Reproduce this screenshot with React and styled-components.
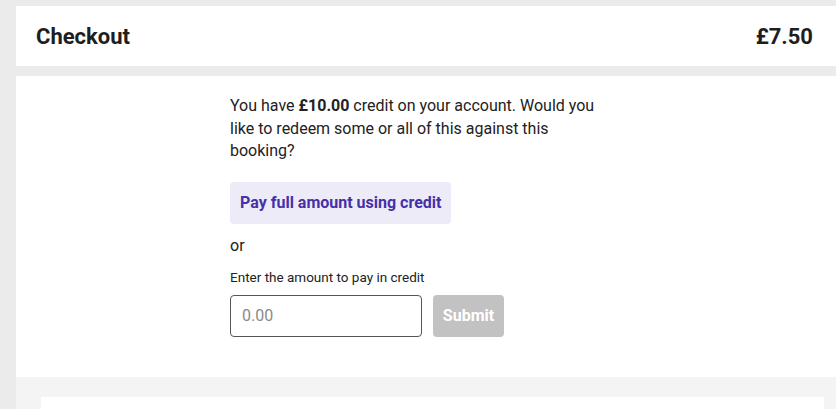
import styled, { createGlobalStyle } from "styled-components"

const GlobalStyle = createGlobalStyle`
    html, body {
        margin: 0;
        padding: 0;
        background-color: #EBEBEB;
        font-family: Roboto, "Liberation Sans", sans-serif;
        color: #212121;
        overflow: hidden;
    }
`

export default function App() {
    return (
        <Page>
            <GlobalStyle />
            <Header>
                <h1>Checkout</h1>
                <span className="total">£7.50</span>
            </Header>

            <CreditPanel>
                <CreditColumn>
                    <p className="intro">
                        You have <strong>£10.00</strong> credit on your account. Would you like to redeem some or all of this against this booking?
                    </p>

                    <PayFullButton>Pay full amount using credit</PayFullButton>

                    <span className="or">or</span>

                    <label className="amountLabel" htmlFor="credit-amount">Enter the amount to pay in credit</label>
                    <AmountRow>
                        <AmountInput id="credit-amount" placeholder="0.00" />
                        <SubmitButton disabled>Submit</SubmitButton>
                    </AmountRow>
                </CreditColumn>
            </CreditPanel>

            <NextSection>
                <NextCard />
            </NextSection>
        </Page>
    )
}

const Page = styled.div`
    width: 836px;
    height: 409px;
    padding: 6px 0 0 16px;
    box-sizing: border-box;
    display: flex;
    flex-direction: column;
    gap: 10px;
`

const Header = styled.div`
    height: 60px;
    background-color: #FFFFFF;
    display: flex;
    align-items: center;
    justify-content: space-between;
    padding: 0 23px 0 20px;
    flex-shrink: 0;

    h1 {
        margin: 0;
        font-size: 22px;
        font-weight: 700;
        color: #1E1E1E;
    }

    .total {
        font-size: 22px;
        font-weight: 700;
        color: #1E1E1E;
    }
`

const CreditPanel = styled.div`
    height: 301px;
    background-color: #FFFFFF;
    display: flex;
    padding: 19px 0 0 214px;
    box-sizing: border-box;
    flex-shrink: 0;
`

const CreditColumn = styled.div`
    width: 380px;
    display: flex;
    flex-direction: column;
    align-items: flex-start;

    .intro {
        margin: 0;
        font-size: 16px;
        line-height: 22.5px;
        color: #222222;
    }

    .intro strong {
        font-weight: 700;
    }

    .or {
        margin-top: 11px;
        font-size: 16px;
        line-height: 22px;
        color: #222222;
    }

    .amountLabel {
        margin-top: 12px;
        font-size: 13.5px;
        line-height: 17px;
        color: #222222;
    }
`

const PayFullButton = styled.button`
    margin-top: 19px;
    height: 42px;
    padding: 0 10px;
    border: none;
    border-radius: 4px;
    background-color: #EDEBF8;
    color: #4530A8;
    font-family: Roboto, "Liberation Sans", sans-serif;
    font-size: 16px;
    font-weight: 700;
    cursor: pointer;
`

const AmountRow = styled.div`
    margin-top: 9px;
    display: flex;
    gap: 11px;
`

const AmountInput = styled.input`
    width: 192px;
    height: 42px;
    box-sizing: border-box;
    border: 1px solid #555555;
    border-radius: 4px;
    padding: 0 11px;
    font-family: Roboto, "Liberation Sans", sans-serif;
    font-size: 16px;
    color: #222222;

    &::placeholder {
        color: #8A8A8A;
    }
`

const SubmitButton = styled.button`
    width: 71px;
    height: 42px;
    border: none;
    border-radius: 4px;
    background-color: #C2C2C2;
    color: #FFFFFF;
    font-family: Roboto, "Liberation Sans", sans-serif;
    font-size: 16px;
    font-weight: 700;
    padding: 0;
`

const NextSection = styled.div`
    margin-top: -10px;
    flex: 1;
    background-color: #F4F4F4;
    padding: 20px 12px 0 25px;
    display: flex;
`

const NextCard = styled.div`
    flex: 1;
    background-color: #FFFFFF;
`
